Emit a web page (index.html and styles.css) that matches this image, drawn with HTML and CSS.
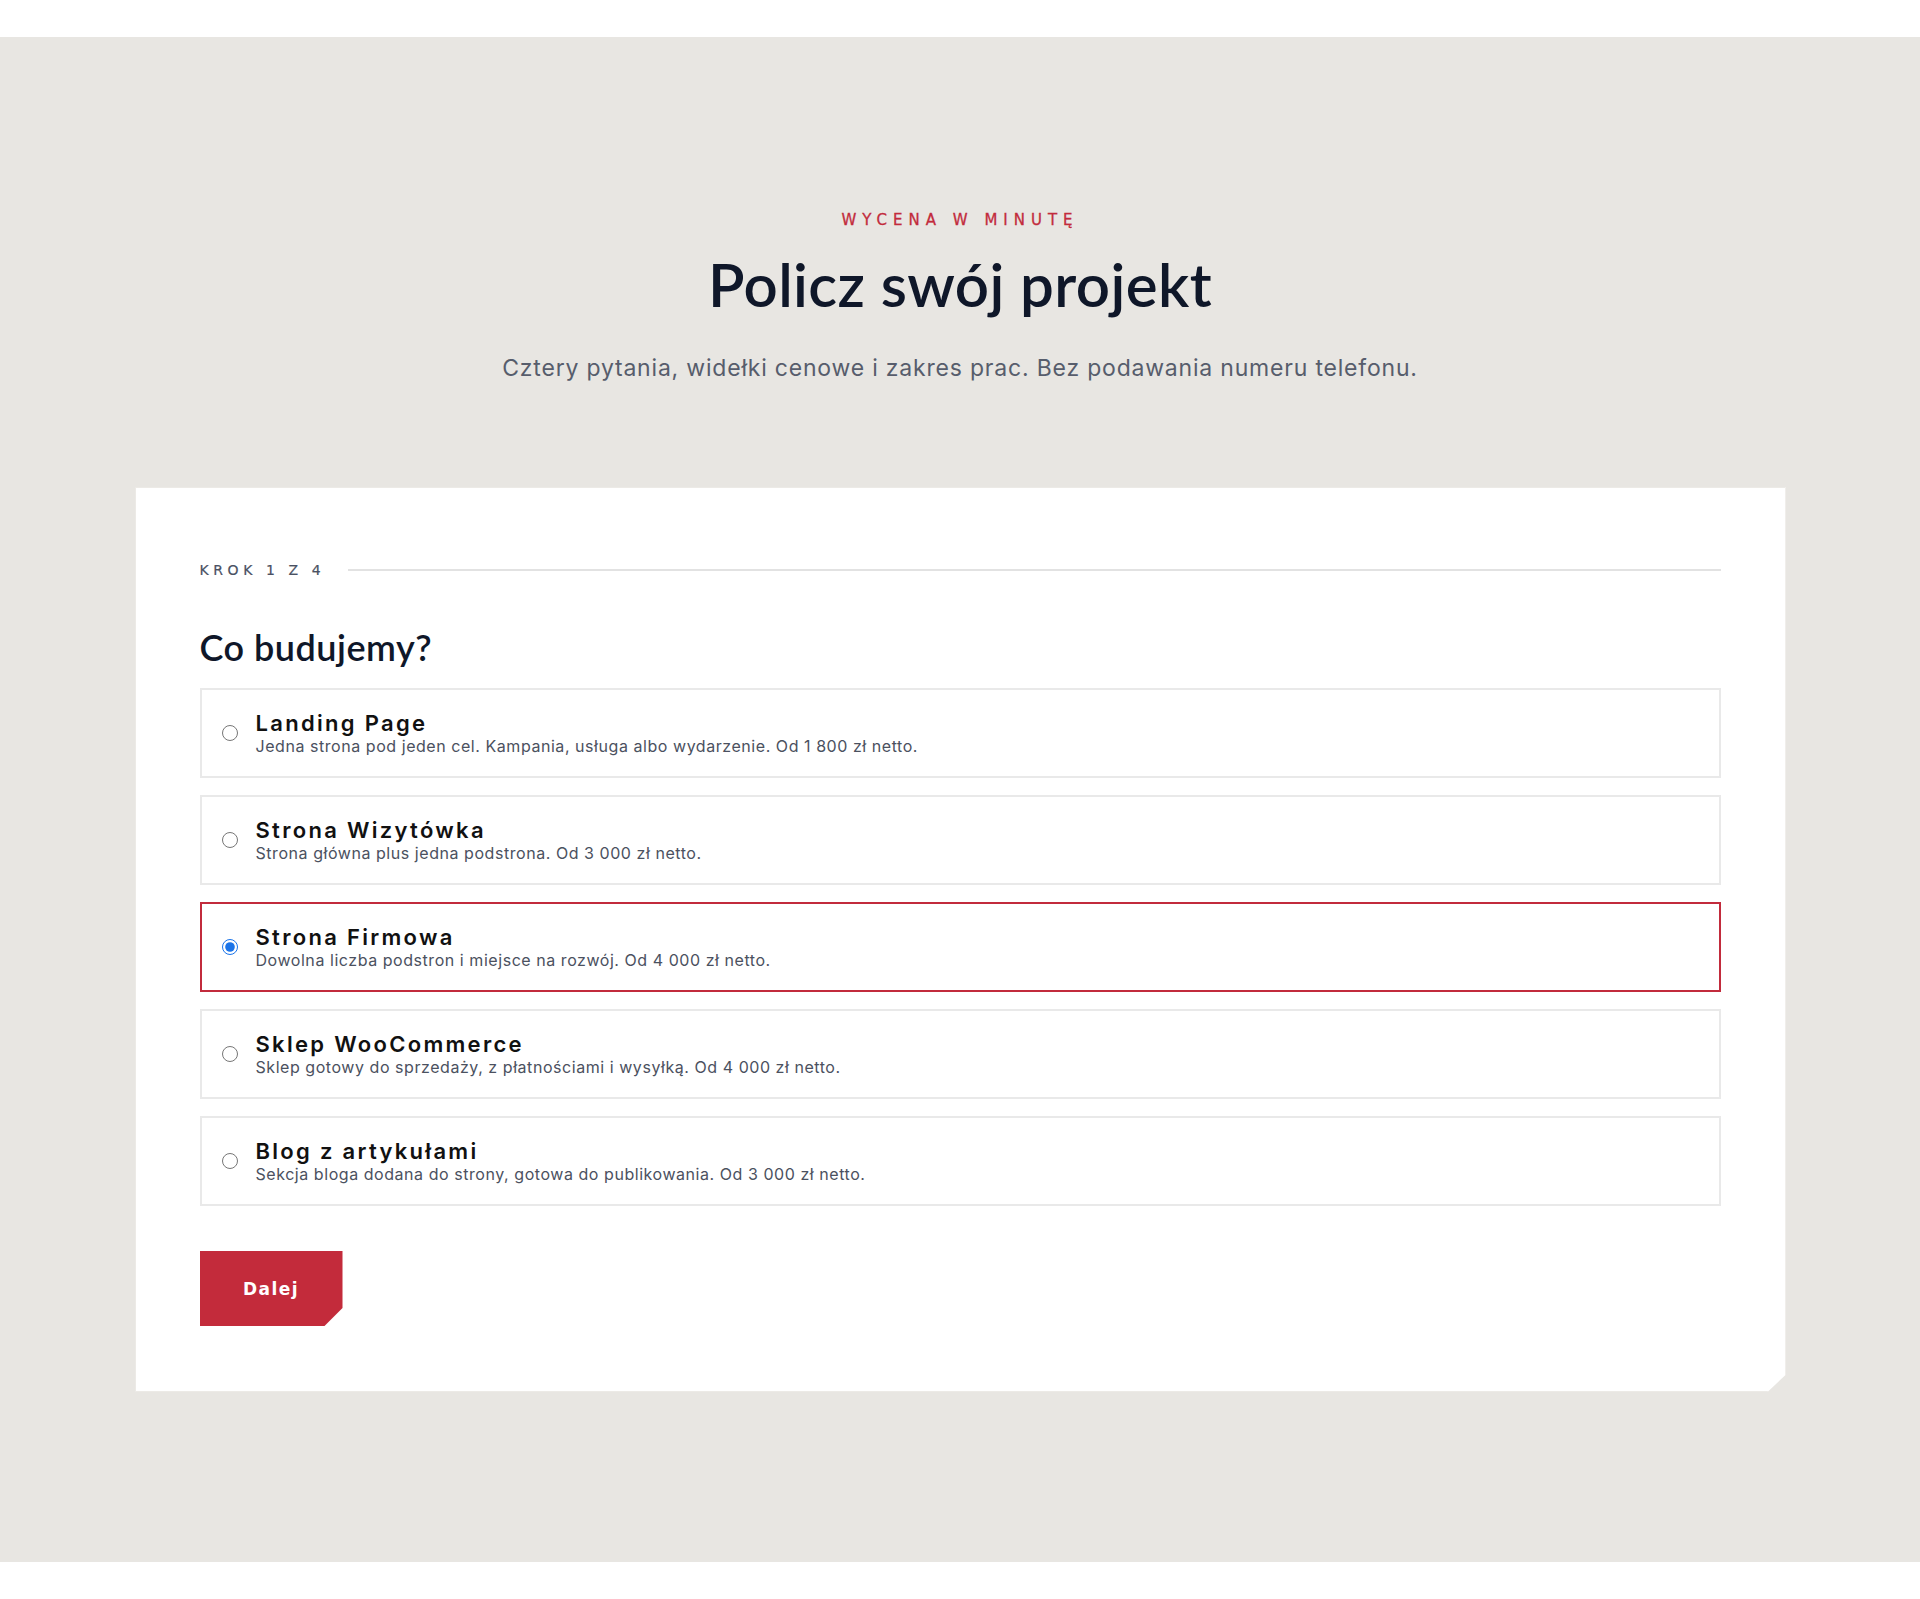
FILE: index.html
```html
<!DOCTYPE html>
<html lang="pl">
<head>
<meta charset="utf-8">
<title>Policz swój projekt</title>
<link rel="stylesheet" href="styles.css">
</head>
<body>
<main class="page">
  <section class="calc">
    <p class="eyebrow">Wycena w minutę</p>
    <h1 class="title">Policz swój projekt</h1>
    <p class="lead">Cztery pytania, widełki cenowe i zakres prac. Bez podawania numeru telefonu.</p>

    <form class="card">
      <div class="step">
        <span class="step-label">Krok 1 z 4</span>
        <span class="step-line"></span>
      </div>
      <h2 class="question">Co budujemy?</h2>
      <div class="options">
        <label class="option">
          <input type="radio" name="type" value="landing">
          <span class="option-text">
            <span class="option-title">Landing Page</span>
            <span class="option-desc">Jedna strona pod jeden cel. Kampania, usługa albo wydarzenie. Od 1 800 zł netto.</span>
          </span>
        </label>
        <label class="option">
          <input type="radio" name="type" value="wizytowka">
          <span class="option-text">
            <span class="option-title">Strona Wizytówka</span>
            <span class="option-desc">Strona główna plus jedna podstrona. Od 3 000 zł netto.</span>
          </span>
        </label>
        <label class="option option-selected">
          <input type="radio" name="type" value="firmowa" checked>
          <span class="option-text">
            <span class="option-title">Strona Firmowa</span>
            <span class="option-desc">Dowolna liczba podstron i miejsce na rozwój. Od 4 000 zł netto.</span>
          </span>
        </label>
        <label class="option">
          <input type="radio" name="type" value="sklep">
          <span class="option-text">
            <span class="option-title">Sklep WooCommerce</span>
            <span class="option-desc">Sklep gotowy do sprzedaży, z płatnościami i wysyłką. Od 4 000 zł netto.</span>
          </span>
        </label>
        <label class="option">
          <input type="radio" name="type" value="blog">
          <span class="option-text">
            <span class="option-title">Blog z artykułami</span>
            <span class="option-desc">Sekcja bloga dodana do strony, gotowa do publikowania. Od 3 000 zł netto.</span>
          </span>
        </label>
      </div>
      <div class="actions">
        <button type="button" class="btn">Dalej</button>
      </div>
    </form>
  </section>
</main>
</body>
</html>
```

FILE: styles.css
```css
* { box-sizing: border-box; }

html, body {
  margin: 0;
  padding: 0;
  background: #ffffff;
}

body {
  font-family: "Inter", "Liberation Sans", sans-serif;
  color: #111827;
}

.page {
  padding: 37px 0 38px;
}

.calc {
  background: #e8e6e2;
  padding: 173px 0 170px;
  display: flex;
  flex-direction: column;
  align-items: center;
}

.eyebrow {
  margin: 0;
  font-family: "DejaVu Sans", sans-serif;
  font-size: 15px;
  line-height: 20px;
  font-weight: 400;
  letter-spacing: 6px;
  text-transform: uppercase;
  color: #c22b3c;
  -webkit-text-stroke: 0.3px #c22b3c;
}

.title {
  margin: 19px 0 0;
  font-family: "Lato", sans-serif;
  font-weight: 600;
  font-size: 60px;
  line-height: 70px;
  letter-spacing: 0.4px;
  color: #0f1729;
}

.lead {
  margin: 33px 0 0;
  font-family: "Inter", sans-serif;
  font-size: 23px;
  line-height: 32px;
  color: #575d6c;
  letter-spacing: 0.8px;
}

.card {
  margin-top: 103px;
  width: 1651px;
  background: #ffffff;
  border: 1px solid #eceae6;
  padding: 72px 64px 65px;
  clip-path: polygon(0 0, 100% 0, 100% calc(100% - 17px), calc(100% - 18px) 100%, 0 100%);
}

.step {
  display: flex;
  align-items: center;
  gap: 23px;
  height: 20px;
}

.step-label {
  font-family: "DejaVu Sans", sans-serif;
  font-size: 14px;
  font-weight: 400;
  letter-spacing: 4.6px;
  text-transform: uppercase;
  color: #4a5163;
  white-space: nowrap;
  -webkit-text-stroke: 0.2px #4a5163;
}

.step-line {
  flex: 1;
  height: 2px;
  background: #e2e2e2;
}

.question {
  margin: 46px 0 0;
  font-family: "Lato", sans-serif;
  font-weight: 600;
  font-size: 36px;
  line-height: 43px;
  letter-spacing: 0.5px;
  color: #0f1729;
}

.options {
  margin-top: 19px;
  display: flex;
  flex-direction: column;
  gap: 17px;
}

.option {
  display: flex;
  align-items: center;
  gap: 18px;
  height: 90px;
  padding: 0 20px;
  border: 2px solid #e9e9e9;
  background: #ffffff;
  cursor: pointer;
}

.option-selected {
  border-color: #c22b3c;
}

.option input {
  width: 16px;
  height: 16px;
  margin: 0;
  flex: none;
  accent-color: #1a73e8;
}

.option-text {
  display: flex;
  flex-direction: column;
}

.option-title {
  font-family: "Inter", sans-serif;
  font-weight: 600;
  font-size: 22px;
  line-height: 25px;
  letter-spacing: 2.3px;
  color: #111111;
}

.option-desc {
  font-family: "Inter", sans-serif;
  font-size: 16px;
  line-height: 20px;
  color: #4b5160;
  letter-spacing: 0.55px;
  font-variant-numeric: oldstyle-nums;
}

.actions {
  margin-top: 45px;
  display: flex;
}

.btn {
  width: 143px;
  height: 75px;
  border: 0;
  background: #c32b3b;
  color: #ffffff;
  font-family: "DejaVu Sans", sans-serif;
  font-weight: 700;
  font-size: 17px;
  letter-spacing: 1.4px;
  cursor: pointer;
  clip-path: polygon(0 0, 100% 0, 100% calc(100% - 18px), calc(100% - 18px) 100%, 0 100%);
}
```
